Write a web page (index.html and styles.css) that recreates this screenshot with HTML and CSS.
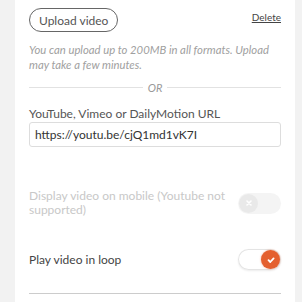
FILE: index.html
```html
<!DOCTYPE html>
<html lang="en">
<head>
    <meta charset="UTF-8">
    <meta name="viewport" content="width=device-width, initial-scale=1.0">
    <title>Video settings</title>
    <link rel="stylesheet" href="styles.css">
</head>
<body>
    <div class="panel">
        <div class="upload-row">
            <button class="upload-btn">Upload video</button>
            <a class="delete-link" href="#">Delete</a>
        </div>
        <p class="upload-hint">You can upload up to 200MB in all formats. Upload may take a few minutes.</p>
        <div class="divider"><span>OR</span></div>
        <label class="field-label">YouTube, Vimeo or DailyMotion URL</label>
        <input class="url-input" value="https://youtu.be/cjQ1md1vK7I">

        <div class="option-row disabled">
            <span class="option-text">Display video on mobile (Youtube not supported)</span>
            <span class="toggle">
                <span class="knob">
                    <svg width="8" height="8" viewBox="0 0 8 8"><path d="M2 2L6 6M6 2L2 6" stroke="#fff" stroke-width="1.6" stroke-linecap="round"/></svg>
                </span>
            </span>
        </div>

        <div class="option-row">
            <span class="option-text">Play video in loop</span>
            <span class="toggle on">
                <span class="knob">
                    <svg width="10" height="10" viewBox="0 0 10 10"><path d="M2.5 5.2L4.3 7L7.6 3.4" fill="none" stroke="#fff" stroke-width="1.8" stroke-linecap="round" stroke-linejoin="round"/></svg>
                </span>
            </span>
        </div>
        <div class="bottom-rule"></div>
    </div>
</body>
</html>
```

FILE: styles.css
```css
body {
    margin: 0;
    background-color: #f2f2f2;
    font-family: 'Lato', sans-serif;
    color: #444;
}

.panel {
    margin-left: 15px;
    width: 252px;
    height: 302px;
    padding: 8px 14px 0;
    background-color: #fff;
}

.upload-row {
    display: flex;
    justify-content: space-between;
    align-items: flex-start;
}

.upload-btn {
    font-family: 'Lato', sans-serif;
    font-size: 12px;
    color: #555;
    background: #fff;
    border: 1px solid #666;
    border-radius: 13px;
    height: 24px;
    padding: 0 9px;
}

.delete-link {
    margin-top: 3px;
    font-size: 10px;
    color: #444;
}

.upload-hint {
    margin: 10px 0 0;
    font-size: 11.3px;
    font-style: italic;
    line-height: 15px;
    color: #a0a0a0;
}

.divider {
    display: flex;
    align-items: center;
    gap: 5px;
    margin-top: 9px;
    font-size: 11px;
    font-style: italic;
    color: #999;
}

.divider::before,
.divider::after {
    content: "";
    flex: 1;
    border-top: 1px solid #e2e2e2;
}

.field-label {
    display: block;
    margin-top: 12px;
    font-size: 12px;
    color: #555;
}

.url-input {
    box-sizing: border-box;
    width: 100%;
    height: 25px;
    margin-top: 1px;
    padding: 0 5px;
    font-family: 'Lato', sans-serif;
    font-size: 12px;
    color: #333;
    border: 1px solid #ddd;
    border-radius: 3px;
}

.option-row {
    display: flex;
    justify-content: space-between;
    align-items: center;
    margin-top: 42px;
}

.option-row + .option-row {
    margin-top: 32px;
}

.option-text {
    width: 205px;
    font-size: 12px;
    line-height: 14px;
    color: #444;
}

.option-row.disabled .option-text {
    color: #c8c8c8;
}

.toggle {
    display: flex;
    align-items: center;
    width: 43px;
    height: 21px;
    padding: 0 1px;
    box-sizing: border-box;
    border-radius: 11px;
    background: #fff;
    box-shadow: inset 0 0 0 1px #e4e4e4, 0 1px 2px rgba(0, 0, 0, 0.08);
}

.toggle.on {
    justify-content: flex-end;
}

.knob {
    display: flex;
    align-items: center;
    justify-content: center;
    width: 19px;
    height: 19px;
    border-radius: 50%;
    background: #e9e9e9;
}

.toggle.on .knob {
    background: #e4602f;
    box-shadow: 0 0 2px rgba(228, 96, 47, 0.6);
}

.disabled .toggle {
    background: #f4f4f4;
    box-shadow: none;
}

.bottom-rule {
    margin-top: 23px;
    border-top: 1px solid #ccc;
}
```
